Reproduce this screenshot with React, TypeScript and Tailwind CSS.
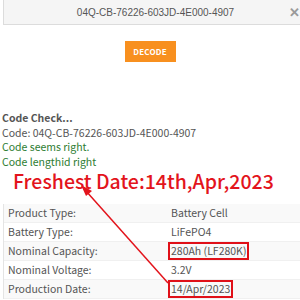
import React from 'react';

const ROWS = [
  { label: 'Product Type:', value: 'Battery Cell' },
  { label: 'Battery Type:', value: 'LiFePO4' },
  { label: 'Nominal Capacity:', value: '280Ah (LF280K)', mark: true },
  { label: 'Nominal Voltage:', value: '3.2V' },
  { label: 'Production Date:', value: '14/Apr/2023', mark: true },
];

const yahei = { fontFamily: '"Noto Sans CJK SC", "Noto Sans", sans-serif' };

const App: React.FC = () => {
  return (
    <div className="relative w-[300px] h-[300px] overflow-hidden bg-white" style={yahei}>
      <div className="ml-[3px] h-[25px] bg-[#f5f5f5] border-l border-b border-[#dcdcdc] flex items-center relative">
        <span
          className="flex-1 text-center text-[10px] text-[#555] pl-[7px]"
          style={{ fontFamily: '"Liberation Sans", Arial, sans-serif' }}
        >
          04Q-CB-76226-603JD-4E000-4907
        </span>
        <span className="absolute right-[0px] top-[5px] text-[13px] font-bold text-[#9a9a9a] leading-none">✕</span>
      </div>

      <div className="flex justify-center mt-[16px]">
        <button className="w-[51px] h-[21px] bg-[#f8901f] text-white text-[8px] font-bold tracking-wide">
          DECODE
        </button>
      </div>

      <div className="mt-[49px] pl-[2px] text-[10.5px] leading-[14.5px]">
        <div className="font-bold text-[#555]">Code Check...</div>
        <div className="text-[#555]">Code: 04Q-CB-76226-603JD-4E000-4907</div>
        <div className="text-[#2e7d32]">Code seems right.</div>
        <div className="text-[#2e7d32]">Code lengthid right</div>
      </div>

      <div className="mt-0 pl-[13px] text-[19.5px] leading-[24px] text-[#e3141c] font-medium">
        Freshest Date:14th,Apr,2023
      </div>

      <div className="mt-[11px] ml-[3px] border-l border-[#e4e4e4] text-[10.5px] text-[#555]">
        {ROWS.map((r, i) => (
          <div
            key={r.label}
            className={`flex h-[19px] items-center border-b border-[#f0f0f0] ${i % 2 === 0 ? 'bg-[#f9f9f9]' : 'bg-white'}`}
          >
            <div className="w-[164px] pl-[4px]">{r.label}</div>
            <div
              className={
                r.mark
                  ? 'px-[1px] border-2 border-[#e01018] leading-[14px]'
                  : 'pl-[3px]'
              }
            >
              {r.value}
            </div>
          </div>
        ))}
      </div>

      <svg className="absolute left-0 top-0 pointer-events-none" width="300" height="300">
        <line x1="168" y1="283" x2="86" y2="191" stroke="#e3141c" strokeWidth="1.5" />
        <polygon points="81,185 92,191 86,196" fill="#e3141c" />
      </svg>
    </div>
  );
};

export default App;
